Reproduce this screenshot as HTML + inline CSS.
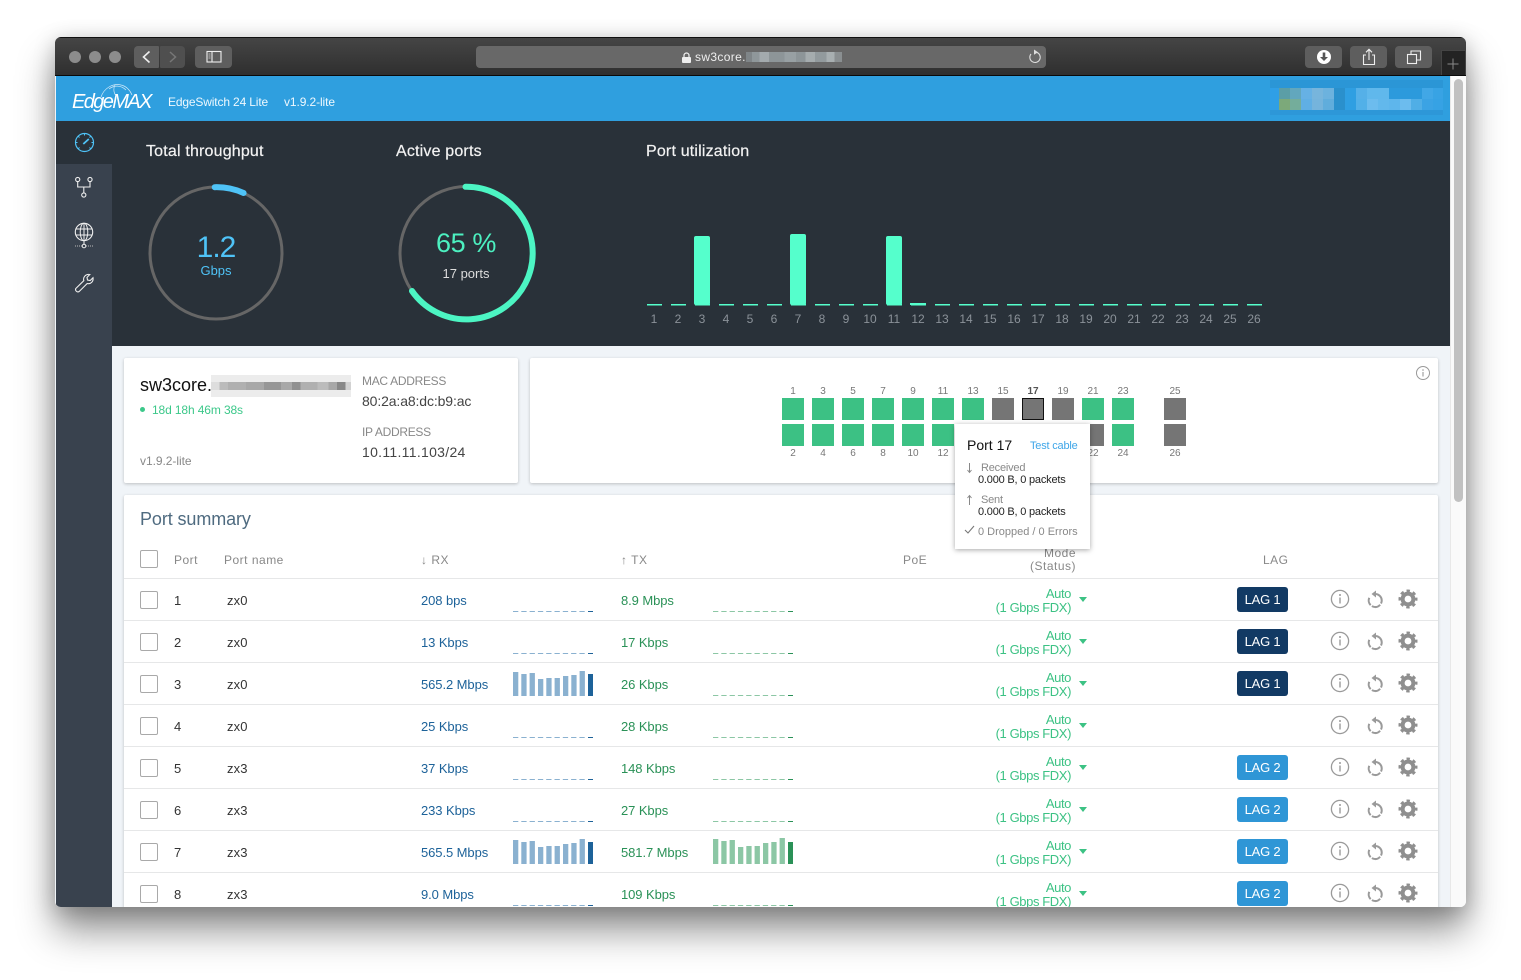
<!DOCTYPE html>
<html><head><meta charset="utf-8"><title>EdgeMAX</title>
<style>
html,body{margin:0;padding:0;width:1521px;height:980px;overflow:hidden;background:#fff;font-family:"Liberation Sans",sans-serif}
div,span,svg{position:absolute;white-space:nowrap}
.shadow{left:55px;top:37px;width:1411px;height:870px;border-radius:6px;box-shadow:0 24px 38px rgba(0,0,0,.42),0 4px 22px rgba(0,0,0,.22)}
.win{left:0;top:0;width:1521px;height:980px;clip-path:inset(37px 55px 73px 55px round 6px);background:#f0f4f8}
.box{box-sizing:border-box}
.btn{background:#5e5e5e;border-radius:4px;top:46px;height:22px}
.tl{width:12px;height:12px;border-radius:6px;background:#8c8c8c;top:51px}
.c{text-align:center}
.card{background:#fff;border-radius:2px;box-shadow:0 1px 3px rgba(0,0,0,.22)}
.n{font-size:12px;color:#8b9299;top:312px;width:24px;text-align:center;line-height:14px}
.tb{background:#55ffcc;width:16px;border-radius:2px}
.pt{font-size:10px;color:#777;width:30px;text-align:center;line-height:12px}
.g{width:22px;height:22px;background:#3cc184}
.k{width:22px;height:22px;background:#757575}
.r{left:124px;width:1314px;height:42px;background:#fff;border-bottom:1px solid #e6e7e8;box-sizing:border-box}
.r div{line-height:42px;font-size:13px;top:1px}
.r .cb{left:16px;top:12px;width:18px;height:18px;border:1px solid #a9a9a9;border-radius:2px;box-sizing:border-box}
.r .a{left:50px;color:#333}.r .b{left:103px;color:#333;letter-spacing:.1px}
.r .rx{left:297px;color:#1d6299;letter-spacing:-.08px}.r .tx{left:497px;color:#2a9157;letter-spacing:-.08px}
.r .m{right:367px;top:8px;line-height:14px;color:#3cc284;text-align:right;letter-spacing:-.4px}
.r .ca{left:955px;top:18px;width:0;height:0;border-left:4px solid transparent;border-right:4px solid transparent;border-top:5px solid #3cc284}
.r .l{left:1113px;top:8px;width:51px;height:25px;line-height:25px;border-radius:3px;color:#fff;text-align:center;font-size:13px;letter-spacing:-.2px}
.l1{background:#123a64}.l2{background:#2f96d6}
.hd{font-size:12px;color:#888;line-height:14px;letter-spacing:.5px}
.sp1{left:389px;top:5px}.sp2{left:589px;top:5px}
.ic1{left:1206px;top:10px}.ic2{left:1241px;top:10px}.ic3{left:1274px;top:10px}
.tt{font-size:11px;line-height:13px}
.ttl{top:142px;font-size:16px;line-height:20px;color:#f2f2f2;letter-spacing:.18px;-webkit-text-stroke:.2px #f2f2f2}
</style></head><body>
<svg width="0" height="0" style="left:0;top:0">
<defs>
<symbol id="db" viewBox="0 0 80 28"><path d="M0 27.5h72" stroke="#8ab1d0" stroke-width="1" stroke-dasharray="5.3 3"/><path d="M75 27.5h5" stroke="#1d6299" stroke-width="1"/></symbol>
<symbol id="dg" viewBox="0 0 80 28"><path d="M0 27.5h72" stroke="#8cc7a5" stroke-width="1" stroke-dasharray="5.3 3"/><path d="M75 27.5h5" stroke="#2a9157" stroke-width="1"/></symbol>
<symbol id="bb" viewBox="0 0 80 28" fill="#8ab1d0"><rect x="0" y="4" width="5.3" height="24"/><rect x="8.3" y="6" width="5.3" height="22"/><rect x="16.6" y="5" width="5.3" height="23"/><rect x="25" y="11" width="5.3" height="17"/><rect x="33.3" y="10" width="5.3" height="18"/><rect x="41.6" y="10" width="5.3" height="18"/><rect x="50" y="8" width="5.3" height="20"/><rect x="58.3" y="7" width="5.3" height="21"/><rect x="66.6" y="3" width="5.3" height="25"/><rect x="75" y="6" width="5" height="22" fill="#1d6299"/></symbol>
<symbol id="bg" viewBox="0 0 80 28" fill="#8cc7a5"><rect x="0" y="3" width="5.3" height="25"/><rect x="8.3" y="5" width="5.3" height="23"/><rect x="16.6" y="4" width="5.3" height="24"/><rect x="25" y="11" width="5.3" height="17"/><rect x="33.3" y="10" width="5.3" height="18"/><rect x="41.6" y="10" width="5.3" height="18"/><rect x="50" y="7" width="5.3" height="21"/><rect x="58.3" y="6" width="5.3" height="22"/><rect x="66.6" y="2" width="5.3" height="26"/><rect x="75" y="6" width="5" height="22" fill="#2a9157"/></symbol>
<symbol id="inf" viewBox="0 0 20 20"><circle cx="10" cy="10" r="8.6" fill="none" stroke="#9a9a9a" stroke-width="1.3"/><path d="M10 8.5v6" stroke="#9a9a9a" stroke-width="1.4"/><circle cx="10" cy="6" r="1" fill="#9a9a9a"/></symbol>
<symbol id="rst" viewBox="0 0 20 20"><path d="M10.5 5A6.5 6.5 0 1 1 4.300 8.800" fill="none" stroke="#9a9a9a" stroke-width="2" stroke-dasharray="13 1.5 9 1.5 20"/><path d="M11 1.500v7L6.500 5z" fill="#9a9a9a"/></symbol>
<symbol id="gr" viewBox="0 0 20 20"><circle cx="10" cy="10" r="5.4" fill="none" stroke="#8f8f8f" stroke-width="4"/><circle cx="10" cy="10" r="8" fill="none" stroke="#8f8f8f" stroke-width="3" stroke-dasharray="3.3 2.98" stroke-dashoffset="1.65"/></symbol>
</defs></svg>
<div class="shadow"></div>
<div class="win">
<!-- titlebar -->
<div style="left:55px;top:37px;width:1411px;height:39px;background:linear-gradient(#454545,#2f2f2f);border-top:1px solid #111;border-bottom:1px solid #0a0a0a;box-sizing:border-box"></div>
<div class="tl" style="left:69px"></div><div class="tl" style="left:89px"></div><div class="tl" style="left:109px"></div>
<div class="btn" style="left:134px;width:25px;border-radius:4px 1px 1px 4px"></div>
<div class="btn" style="left:160px;width:25px;background:#4f4f4f;border-radius:1px 4px 4px 1px"></div>
<svg style="left:134px;top:46px" width="52" height="22"><path d="M15.500 5.500L9.500 11l6 5.500" fill="none" stroke="#eee" stroke-width="1.600"/><path d="M36 6l5.500 5-5.500 5" fill="none" stroke="#777" stroke-width="1.500"/></svg>
<div class="btn" style="left:195px;width:37px"></div>
<svg style="left:205px;top:50px" width="18" height="14"><rect x="2" y="1.500" width="14" height="10.500" fill="none" stroke="#eee" stroke-width="1.100"/><path d="M7 1.500v10.500" stroke="#eee" stroke-width="1.100"/><path d="M3.500 4h2M3.500 6h2M3.500 8h2" stroke="#bbb"/></svg>
<div class="btn" style="left:476px;width:570px;background:#686868"></div>
<svg style="left:681px;top:52px" width="11" height="11"><rect x="1" y="5" width="9" height="6" rx="1" fill="#eee"/><path d="M3 5V3.500a2.500 2.500 0 0 1 5 0V5" fill="none" stroke="#eee" stroke-width="1.200"/></svg>
<div style="left:695px;top:50px;font-size:12px;line-height:15px;color:#eee;letter-spacing:.35px">sw3core.</div>
<div style="left:746px;top:52px;width:96px;height:10px;background:linear-gradient(90deg,#7f8588 0 6%,#8f979a 6% 14%,#a3aaad 14% 24%,#8d9598 24% 40%,#98a0a3 40% 52%,#8d9598 52% 62%,#a5acae 62% 72%,#929a9d 72% 84%,#a8afb1 84% 92%,#8a8f91 92% 100%)"></div>
<svg style="left:1027px;top:49px" width="16" height="16"><path d="M9.500 3.300A5.200 5.200 0 1 1 4 5" fill="none" stroke="#ddd" stroke-width="1.100"/><path d="M7 .5l4 2.800-4 2.500z" fill="#ddd"/></svg>
<div class="btn" style="left:1305px;width:37px"></div><div class="btn" style="left:1350px;width:37px"></div><div class="btn" style="left:1395px;width:37px"></div>
<svg style="left:1316px;top:49px" width="16" height="16"><circle cx="8" cy="8" r="7" fill="#fff"/><path d="M6.700 3.500h2.600v4.500H12L8 12 4 8h2.700z" fill="#555"/></svg>
<svg style="left:1360px;top:48px" width="18" height="18"><path d="M6 7H3.500v9.500h11V7H12" fill="none" stroke="#eee" stroke-width="1.100"/><path d="M9 12V1.500M6 4.300l3-3 3 3" fill="none" stroke="#eee" stroke-width="1.100"/></svg>
<svg style="left:1405px;top:48px" width="18" height="18"><rect x="2.500" y="6.500" width="9" height="9" fill="none" stroke="#eee" stroke-width="1.100"/><path d="M6 6V3h9.500v9H12" fill="none" stroke="#eee" stroke-width="1.100"/></svg>
<div class="box" style="left:1441px;top:50px;width:25px;height:25px;background:#232323;border:1px solid #444;border-bottom:0"></div>
<svg style="left:1446px;top:57px" width="14" height="14"><path d="M7 1.500v11M1.500 7h11" stroke="#8a8a8a" stroke-width="1"/></svg>
<!-- blue header -->
<div style="left:56px;top:76px;width:1394px;height:45px;background:#2f9fdf"></div>
<div style="left:72px;top:90px;font-size:20px;line-height:24px;font-style:italic;color:#fff;letter-spacing:-1.6px">EdgeMAX</div>
<svg style="left:95px;top:80px" width="50" height="18"><path d="M6 17C9 8 18 3 26 5c5 1 9 5 11 10M14 9c5-4 12-4 17 1M20 5c-2 4-1 8 1 11" fill="none" stroke="#cfe9f8" stroke-width=".7"/></svg>
<div style="left:168px;top:95px;font-size:12px;line-height:14px;color:#eef8fe;letter-spacing:-.15px">EdgeSwitch 24 Lite</div>
<div style="left:284px;top:95px;font-size:12px;line-height:14px;color:#eef8fe;letter-spacing:-.1px">v1.9.2-lite</div>
<svg style="left:1270px;top:80px" width="173" height="35">
<rect width="173" height="8" fill="#2b96d6"/><rect y="30" width="173" height="5" fill="#2d97d8"/>
<rect y="8" width="9" height="22" fill="#2f9fe6"/>
<rect x="9" y="8" width="11" height="11" fill="#5b9ea6"/><rect x="20" y="8" width="11" height="11" fill="#62a7bd"/><rect x="31" y="8" width="11" height="11" fill="#66b1e4"/><rect x="42" y="8" width="11" height="11" fill="#77b5dc"/><rect x="53" y="8" width="11" height="11" fill="#6cb2de"/><rect x="64" y="8" width="11" height="22" fill="#2a90cc"/><rect x="75" y="8" width="11" height="22" fill="#2f9fe2"/><rect x="86" y="8" width="11" height="11" fill="#55b0e8"/><rect x="97" y="8" width="22" height="11" fill="#60b8ec"/><rect x="119" y="8" width="33" height="11" fill="#2c9adc"/><rect x="152" y="8" width="11" height="11" fill="#41a7e6"/><rect x="163" y="8" width="10" height="11" fill="#38a3e4"/>
<rect x="9" y="19" width="11" height="11" fill="#7ca97a"/><rect x="20" y="19" width="11" height="11" fill="#74ad9b"/><rect x="31" y="19" width="11" height="11" fill="#60afe4"/><rect x="42" y="19" width="11" height="11" fill="#75b4dc"/><rect x="53" y="19" width="11" height="11" fill="#60addc"/><rect x="86" y="19" width="11" height="11" fill="#52b0e8"/><rect x="97" y="19" width="11" height="11" fill="#6cbcee"/><rect x="108" y="19" width="11" height="11" fill="#62b8ec"/><rect x="119" y="19" width="11" height="11" fill="#5eb6ec"/><rect x="130" y="19" width="11" height="11" fill="#6cbcee"/><rect x="141" y="19" width="11" height="11" fill="#50aee6"/><rect x="152" y="19" width="11" height="11" fill="#3ba3e4"/><rect x="163" y="19" width="10" height="11" fill="#36a2e4"/>
</svg>
<!-- dark panel -->
<div style="left:56px;top:121px;width:1394px;height:225px;background:#293139"></div>
<div style="left:56px;top:164px;width:56px;height:743px;background:#39424e"></div>
<svg style="left:72px;top:130px" width="25" height="25"><circle cx="12.500" cy="12.500" r="9" fill="none" stroke="#4fc3f7" stroke-width="1.200"/><path d="M12.500 3.500v2M3.500 12.500h2M19.500 12.500h2M6 6l1.500 1.500M19 6l-1.500 1.500M6 19l1.500-1.500M19 19l-1.500-1.500" stroke="#4fc3f7" stroke-width="1"/><path d="M11.300 14l5.500-5" stroke="#4fc3f7" stroke-width="1.800"/></svg>
<svg style="left:72px;top:174px" width="25" height="25"><circle cx="5.700" cy="5.500" r="2.100" fill="none" stroke="#eee" stroke-width="1.100"/><circle cx="18" cy="5.500" r="2.100" fill="none" stroke="#eee" stroke-width="1.100"/><circle cx="11.800" cy="21" r="2.100" fill="none" stroke="#eee" stroke-width="1.100"/><path d="M5.700 7.600v5.400h12.300V7.600M11.800 13v6" fill="none" stroke="#eee" stroke-width="1.100"/></svg>
<svg style="left:72px;top:220px" width="25" height="30"><circle cx="12" cy="12" r="8.700" fill="none" stroke="#eee" stroke-width="1.100"/><ellipse cx="12" cy="12" rx="3.800" ry="8.700" fill="none" stroke="#eee"/><path d="M4 9h16M4 15h16M12 3v18" stroke="#eee"/><path d="M12 21v3.500" stroke="#eee"/><circle cx="12" cy="26" r="1.800" fill="none" stroke="#eee"/><path d="M3 26h7M14 26h7.500" stroke="#bbb" stroke-dasharray="1 1"/></svg>
<svg style="left:72px;top:271px" width="25" height="25"><path d="M3.800 17.500l8-7.800c-1-3.300 1.800-7 6-6.200l-2.800 2.900.5 2.600 2.700.5 2.800-2.800c.7 3.800-2.400 6.800-5.800 5.800l-8 8c-2 1.300-4.400-1-3.400-3z" fill="none" stroke="#eee" stroke-width="1.100"/></svg>
<div class="ttl" style="left:146px">Total throughput</div>
<div class="ttl" style="left:396px">Active ports</div>
<div class="ttl" style="left:646px">Port utilization</div>
<svg style="left:140px;top:175px" width="410" height="155" fill="none">
<circle cx="76" cy="78" r="66" stroke="#666" stroke-width="3"/>
<path d="M74.700 12.200A66 66 0 0 1 103.600 18" stroke="#4fc3f7" stroke-width="6" stroke-linecap="round"/>
<circle cx="326.500" cy="78" r="66.500" stroke="#666" stroke-width="3"/>
<path d="M325.500 11.800A66.300 66.300 0 1 1 272 116" stroke="#4cf5c3" stroke-width="6" stroke-linecap="round"/>
</svg>
<div class="c" style="left:166px;top:230px;width:100px;font-size:30px;line-height:36px;color:#4fc3f7;letter-spacing:-1px">1.2</div>
<div class="c" style="left:166px;top:263px;width:100px;font-size:13px;line-height:16px;color:#4fc3f7">Gbps</div>
<div class="c" style="left:416px;top:226px;width:100px;font-size:27px;line-height:34px;color:#4cf0c0;letter-spacing:-.4px">65 %</div>
<div class="c" style="left:416px;top:266px;width:100px;font-size:13px;line-height:16px;color:#ddd">17 ports</div>
<!-- utilization -->
<div style="left:646.500px;top:0;width:616px;height:330px;background:repeating-linear-gradient(90deg,#55ffcc 0,#55ffcc 15px,transparent 15px,transparent 24px);clip-path:inset(304px 0 24.500px 0)"></div>
<div class="tb" style="left:694px;top:236px;height:69px"></div><div class="tb" style="left:790px;top:234px;height:71px"></div><div class="tb" style="left:886px;top:236px;height:69px"></div><div style="left:910px;top:303px;width:16px;height:2px;background:#55ffcc"></div>
<div class="n" style="left:642px">1</div><div class="n" style="left:666px">2</div><div class="n" style="left:690px">3</div><div class="n" style="left:714px">4</div><div class="n" style="left:738px">5</div><div class="n" style="left:762px">6</div><div class="n" style="left:786px">7</div><div class="n" style="left:810px">8</div><div class="n" style="left:834px">9</div><div class="n" style="left:858px">10</div><div class="n" style="left:882px">11</div><div class="n" style="left:906px">12</div><div class="n" style="left:930px">13</div><div class="n" style="left:954px">14</div><div class="n" style="left:978px">15</div><div class="n" style="left:1002px">16</div><div class="n" style="left:1026px">17</div><div class="n" style="left:1050px">18</div><div class="n" style="left:1074px">19</div><div class="n" style="left:1098px">20</div><div class="n" style="left:1122px">21</div><div class="n" style="left:1146px">22</div><div class="n" style="left:1170px">23</div><div class="n" style="left:1194px">24</div><div class="n" style="left:1218px">25</div><div class="n" style="left:1242px">26</div>
<!-- scrollbar -->
<div style="left:1450px;top:76px;width:16px;height:831px;background:#fafafa;border-left:1px solid #e8e8e8;box-sizing:border-box"></div>
<div style="left:1454px;top:79px;width:9px;height:423px;background:#c1c1c1;border-radius:5px"></div>
<!-- device card -->
<div class="card" style="left:124px;top:358px;width:394px;height:125px"></div>
<div style="left:140px;top:374px;font-size:18px;line-height:22px;color:#111">sw3core.</div>
<div style="left:211px;top:375px;width:140px;height:22px;background:#ececec"></div>
<div style="left:211px;top:382px;width:140px;height:8px;background:linear-gradient(90deg,#ddd 0 6%,#bbb 6% 12%,#b0b0b0 12% 25%,#a8a8a8 25% 38%,#979797 38% 50%,#a8a8a8 50% 58%,#909090 58% 64%,#b0b0b0 64% 76%,#bcbcbc 76% 84%,#a8a8a8 84% 90%,#888 90% 96%,#d2d2d2 96% 100%)"></div>
<div style="left:140px;top:407px;width:5px;height:5px;border-radius:3px;background:#3cc88a"></div>
<div style="left:152px;top:403px;font-size:12px;line-height:14px;color:#3cc88a;letter-spacing:-.12px">18d 18h 46m 38s</div>
<div style="left:140px;top:454px;font-size:12px;line-height:14px;color:#888;letter-spacing:-.05px">v1.9.2-lite</div>
<div style="left:362px;top:374px;font-size:12px;line-height:14px;color:#888;letter-spacing:-.3px">MAC ADDRESS</div>
<div style="left:362px;top:393px;font-size:14px;line-height:17px;color:#444;letter-spacing:-.12px">80:2a:a8:dc:b9:ac</div>
<div style="left:362px;top:425px;font-size:12px;line-height:14px;color:#888;letter-spacing:-.3px">IP ADDRESS</div>
<div style="left:362px;top:444px;font-size:14px;line-height:17px;color:#444;letter-spacing:.3px">10.11.11.103/24</div>
<!-- ports card -->
<div class="card" style="left:530px;top:358px;width:908px;height:125px"></div>
<svg style="left:1415px;top:365px" width="16" height="16"><circle cx="8" cy="8" r="6.500" fill="none" stroke="#999"/><path d="M8 7v4.500" stroke="#999" stroke-width="1.100"/><circle cx="8" cy="5" r=".8" fill="#999"/></svg>
<div class="pt" style="left:778px;top:386px">1</div><div class="pt" style="left:808px;top:386px">3</div><div class="pt" style="left:838px;top:386px">5</div><div class="pt" style="left:868px;top:386px">7</div><div class="pt" style="left:898px;top:386px">9</div><div class="pt" style="left:928px;top:386px">11</div><div class="pt" style="left:958px;top:386px">13</div><div class="pt" style="left:988px;top:386px">15</div><div class="pt" style="left:1018px;top:386px;color:#555;font-weight:bold">17</div><div class="pt" style="left:1048px;top:386px">19</div><div class="pt" style="left:1078px;top:386px">21</div><div class="pt" style="left:1108px;top:386px">23</div><div class="pt" style="left:1160px;top:386px">25</div>
<div class="g" style="left:782px;top:398px"></div><div class="g" style="left:812px;top:398px"></div><div class="g" style="left:842px;top:398px"></div><div class="g" style="left:872px;top:398px"></div><div class="g" style="left:902px;top:398px"></div><div class="g" style="left:932px;top:398px"></div><div class="g" style="left:962px;top:398px"></div><div class="k" style="left:992px;top:398px"></div><div class="k box" style="left:1022px;top:398px;border:1px solid #111"></div><div class="k" style="left:1052px;top:398px"></div><div class="g" style="left:1082px;top:398px"></div><div class="g" style="left:1112px;top:398px"></div><div class="k" style="left:1164px;top:398px"></div>
<div class="g" style="left:782px;top:424px"></div><div class="g" style="left:812px;top:424px"></div><div class="g" style="left:842px;top:424px"></div><div class="g" style="left:872px;top:424px"></div><div class="g" style="left:902px;top:424px"></div><div class="g" style="left:932px;top:424px"></div><div class="g" style="left:962px;top:424px"></div><div class="k" style="left:992px;top:424px"></div><div class="k" style="left:1022px;top:424px"></div><div class="k" style="left:1052px;top:424px"></div><div class="k" style="left:1082px;top:424px"></div><div class="g" style="left:1112px;top:424px"></div><div class="k" style="left:1164px;top:424px"></div>
<div class="pt" style="left:778px;top:448px">2</div><div class="pt" style="left:808px;top:448px">4</div><div class="pt" style="left:838px;top:448px">6</div><div class="pt" style="left:868px;top:448px">8</div><div class="pt" style="left:898px;top:448px">10</div><div class="pt" style="left:928px;top:448px">12</div><div class="pt" style="left:1078px;top:448px">22</div><div class="pt" style="left:1108px;top:448px">24</div><div class="pt" style="left:1160px;top:448px">26</div>
<!-- summary card -->
<div class="card" style="left:124px;top:495px;width:1314px;height:430px"></div>
<div style="left:140px;top:508px;font-size:18px;line-height:22px;color:#4f6b80;letter-spacing:-.1px">Port summary</div>
<div class="box" style="left:140px;top:550px;width:18px;height:18px;border:1px solid #a9a9a9;border-radius:2px"></div>
<div class="hd" style="left:174px;top:553px">Port</div>
<div class="hd" style="left:224px;top:553px">Port name</div>
<div class="hd" style="left:421px;top:553px">↓ RX</div>
<div class="hd" style="left:621px;top:553px">↑ TX</div>
<div class="hd" style="left:903px;top:553px">PoE</div>
<div class="hd" style="right:445px;top:547px;text-align:right;line-height:13px">Mode<br>(Status)</div>
<div class="hd" style="left:1263px;top:553px">LAG</div>
<div style="left:124px;top:578px;width:1314px;height:1px;background:#e6e7e8"></div>
<div class="r" style="top:579px"><div class="cb"></div><div class="a">1</div><div class="b">zx0</div><div class="rx">208 bps</div><svg class="sp1" width="80" height="28"><use href="#db"/></svg><div class="tx">8.9 Mbps</div><svg class="sp2" width="80" height="28"><use href="#dg"/></svg><div class="m">Auto<br>(1 Gbps FDX)</div><div class="ca"></div><div class="l l1">LAG 1</div><svg class="ic1" width="20" height="20"><use href="#inf"/></svg><svg class="ic2" width="20" height="20"><use href="#rst"/></svg><svg class="ic3" width="20" height="20"><use href="#gr"/></svg></div>
<div class="r" style="top:621px"><div class="cb"></div><div class="a">2</div><div class="b">zx0</div><div class="rx">13 Kbps</div><svg class="sp1" width="80" height="28"><use href="#db"/></svg><div class="tx">17 Kbps</div><svg class="sp2" width="80" height="28"><use href="#dg"/></svg><div class="m">Auto<br>(1 Gbps FDX)</div><div class="ca"></div><div class="l l1">LAG 1</div><svg class="ic1" width="20" height="20"><use href="#inf"/></svg><svg class="ic2" width="20" height="20"><use href="#rst"/></svg><svg class="ic3" width="20" height="20"><use href="#gr"/></svg></div>
<div class="r" style="top:663px"><div class="cb"></div><div class="a">3</div><div class="b">zx0</div><div class="rx">565.2 Mbps</div><svg class="sp1" width="80" height="28"><use href="#bb"/></svg><div class="tx">26 Kbps</div><svg class="sp2" width="80" height="28"><use href="#dg"/></svg><div class="m">Auto<br>(1 Gbps FDX)</div><div class="ca"></div><div class="l l1">LAG 1</div><svg class="ic1" width="20" height="20"><use href="#inf"/></svg><svg class="ic2" width="20" height="20"><use href="#rst"/></svg><svg class="ic3" width="20" height="20"><use href="#gr"/></svg></div>
<div class="r" style="top:705px"><div class="cb"></div><div class="a">4</div><div class="b">zx0</div><div class="rx">25 Kbps</div><svg class="sp1" width="80" height="28"><use href="#db"/></svg><div class="tx">28 Kbps</div><svg class="sp2" width="80" height="28"><use href="#dg"/></svg><div class="m">Auto<br>(1 Gbps FDX)</div><div class="ca"></div><svg class="ic1" width="20" height="20"><use href="#inf"/></svg><svg class="ic2" width="20" height="20"><use href="#rst"/></svg><svg class="ic3" width="20" height="20"><use href="#gr"/></svg></div>
<div class="r" style="top:747px"><div class="cb"></div><div class="a">5</div><div class="b">zx3</div><div class="rx">37 Kbps</div><svg class="sp1" width="80" height="28"><use href="#db"/></svg><div class="tx">148 Kbps</div><svg class="sp2" width="80" height="28"><use href="#dg"/></svg><div class="m">Auto<br>(1 Gbps FDX)</div><div class="ca"></div><div class="l l2">LAG 2</div><svg class="ic1" width="20" height="20"><use href="#inf"/></svg><svg class="ic2" width="20" height="20"><use href="#rst"/></svg><svg class="ic3" width="20" height="20"><use href="#gr"/></svg></div>
<div class="r" style="top:789px"><div class="cb"></div><div class="a">6</div><div class="b">zx3</div><div class="rx">233 Kbps</div><svg class="sp1" width="80" height="28"><use href="#db"/></svg><div class="tx">27 Kbps</div><svg class="sp2" width="80" height="28"><use href="#dg"/></svg><div class="m">Auto<br>(1 Gbps FDX)</div><div class="ca"></div><div class="l l2">LAG 2</div><svg class="ic1" width="20" height="20"><use href="#inf"/></svg><svg class="ic2" width="20" height="20"><use href="#rst"/></svg><svg class="ic3" width="20" height="20"><use href="#gr"/></svg></div>
<div class="r" style="top:831px"><div class="cb"></div><div class="a">7</div><div class="b">zx3</div><div class="rx">565.5 Mbps</div><svg class="sp1" width="80" height="28"><use href="#bb"/></svg><div class="tx">581.7 Mbps</div><svg class="sp2" width="80" height="28"><use href="#bg"/></svg><div class="m">Auto<br>(1 Gbps FDX)</div><div class="ca"></div><div class="l l2">LAG 2</div><svg class="ic1" width="20" height="20"><use href="#inf"/></svg><svg class="ic2" width="20" height="20"><use href="#rst"/></svg><svg class="ic3" width="20" height="20"><use href="#gr"/></svg></div>
<div class="r" style="top:873px"><div class="cb"></div><div class="a">8</div><div class="b">zx3</div><div class="rx">9.0 Mbps</div><svg class="sp1" width="80" height="28"><use href="#db"/></svg><div class="tx">109 Kbps</div><svg class="sp2" width="80" height="28"><use href="#dg"/></svg><div class="m">Auto<br>(1 Gbps FDX)</div><div class="ca"></div><div class="l l2">LAG 2</div><svg class="ic1" width="20" height="20"><use href="#inf"/></svg><svg class="ic2" width="20" height="20"><use href="#rst"/></svg><svg class="ic3" width="20" height="20"><use href="#gr"/></svg></div>
<!-- tooltip -->
<div style="left:955px;top:424px;width:135px;height:125px;background:#fff;box-shadow:0 1px 5px rgba(0,0,0,.35)"></div>
<div style="left:967px;top:437px;font-size:14px;line-height:16px;color:#111">Port 17</div>
<div class="tt" style="left:1030px;top:440px;color:#3fa6e8;letter-spacing:-.2px">Test cable</div>
<svg style="left:965px;top:462px" width="9" height="12"><path d="M4.500 1v9M2.500 8l2 2.500 2-2.500" fill="none" stroke="#888"/></svg>
<div class="tt" style="left:981px;top:462px;color:#888;letter-spacing:-.2px">Received</div>
<div class="tt" style="left:978px;top:474px;color:#222;letter-spacing:-.2px">0.000 B, 0 packets</div>
<svg style="left:965px;top:494px" width="9" height="12"><path d="M4.500 11V2M2.500 4l2-2.500 2 2.500" fill="none" stroke="#888"/></svg>
<div class="tt" style="left:981px;top:494px;color:#888;letter-spacing:-.2px">Sent</div>
<div class="tt" style="left:978px;top:506px;color:#222;letter-spacing:-.2px">0.000 B, 0 packets</div>
<svg style="left:964px;top:525px" width="11" height="10"><path d="M1 5l3 3 6-7" fill="none" stroke="#777" stroke-width="1.100"/></svg>
<div class="tt" style="left:978px;top:526px;color:#888;letter-spacing:0">0 Dropped / 0 Errors</div>
</div>
</body></html>
